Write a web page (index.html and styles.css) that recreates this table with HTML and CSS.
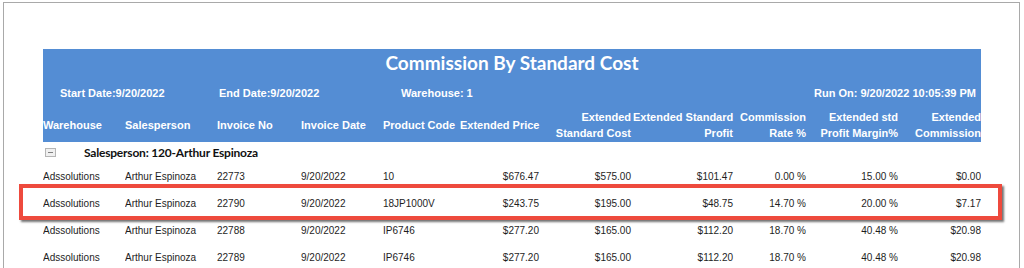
FILE: index.html
```html
<!DOCTYPE html>
<html>
<head>
<meta charset="utf-8">
<link rel="stylesheet" href="styles.css">
</head>
<body>
<div class="page">
  <div class="report">
    <div class="banner">
      <div class="title">Commission By Standard Cost</div>
      <div class="info">
        <span class="info-start">Start Date:9/20/2022</span>
        <span class="info-end">End Date:9/20/2022</span>
        <span class="info-wh">Warehouse: 1</span>
        <span class="info-run">Run On: 9/20/2022 10:05:39 PM</span>
      </div>
    </div>
    <table class="grid">
      <colgroup>
        <col class="c1"><col class="c2"><col class="c3"><col class="c4"><col class="c5"><col class="c6"><col class="c7"><col class="c8"><col class="c9"><col class="c10"><col class="c11">
      </colgroup>
      <thead>
        <tr>
          <th class="l first">Warehouse</th>
          <th class="l">Salesperson</th>
          <th class="l">Invoice No</th>
          <th class="l">Invoice Date</th>
          <th class="l">Product Code</th>
          <th class="l">Extended Price</th>
          <th class="r">Extended<br>Standard Cost</th>
          <th class="r">Extended Standard<br>Profit</th>
          <th class="r">Commission<br>Rate %</th>
          <th class="r">Extended std<br>Profit Margin%</th>
          <th class="r last">Extended<br>Commission</th>
        </tr>
      </thead>
      <tbody>
        <tr class="group">
          <td colspan="11"><span class="toggle"></span><span class="group-label">Salesperson: 120-Arthur Espinoza</span></td>
        </tr>
        <tr class="row">
          <td>Adssolutions</td><td>Arthur Espinoza</td><td>22773</td><td>9/20/2022</td><td>10</td>
          <td class="r">$676.47</td><td class="r">$575.00</td><td class="r">$101.47</td><td class="r">0.00 %</td><td class="r">15.00 %</td><td class="r last">$0.00</td>
        </tr>
        <tr class="row">
          <td>Adssolutions</td><td>Arthur Espinoza</td><td>22790</td><td>9/20/2022</td><td>18JP1000V</td>
          <td class="r">$243.75</td><td class="r">$195.00</td><td class="r">$48.75</td><td class="r">14.70 %</td><td class="r">20.00 %</td><td class="r last">$7.17</td>
        </tr>
        <tr class="row">
          <td>Adssolutions</td><td>Arthur Espinoza</td><td>22788</td><td>9/20/2022</td><td>IP6746</td>
          <td class="r">$277.20</td><td class="r">$165.00</td><td class="r">$112.20</td><td class="r">18.70 %</td><td class="r">40.48 %</td><td class="r last">$20.98</td>
        </tr>
        <tr class="row">
          <td>Adssolutions</td><td>Arthur Espinoza</td><td>22789</td><td>9/20/2022</td><td>IP6746</td>
          <td class="r">$277.20</td><td class="r">$165.00</td><td class="r">$112.20</td><td class="r">18.70 %</td><td class="r">40.48 %</td><td class="r last">$20.98</td>
        </tr>
      </tbody>
    </table>
  </div>
  <div class="highlight"></div>
</div>
</body>
</html>
```

FILE: styles.css
```css
html, body {
  margin: 0;
  padding: 0;
  background: #ffffff;
  overflow: hidden;
}

.page {
  position: relative;
  margin: 2px 0 0 3px;
  width: 1017px;
  height: 266px;
  overflow: hidden;
  border: 1px solid #a9a9a9;
  border-bottom: none;
  box-sizing: border-box;
  padding: 46px 0 0 39px;
}

.report {
  width: 938px;
  overflow: hidden;
}

.banner {
  background: #548dd4;
  color: #ffffff;
}

.title {
  height: 28px;
  line-height: 28px;
  text-align: center;
  font-family: Lato, "Open Sans", sans-serif;
  font-weight: 700;
  font-size: 19px;
}

.info {
  display: flex;
  height: 31px;
  align-items: center;
  font-family: "Liberation Sans", Arial, sans-serif;
  font-weight: 700;
  font-size: 11px;
}

.info-start { margin-left: 17px; width: 159px; }
.info-end { width: 182px; }
.info-wh { flex: 1; }
.info-run { margin-right: 5px; }

.grid {
  width: 938px;
  table-layout: fixed;
  border-collapse: collapse;
  border-spacing: 0;
}

.c1 { width: 82px; }
.c2 { width: 92px; }
.c3 { width: 84px; }
.c4 { width: 82px; }
.c5 { width: 77px; }
.c6 { width: 81px; }
.c7 { width: 92px; }
.c8 { width: 102px; }
.c9 { width: 73px; }
.c10 { width: 92px; }
.c11 { width: 81px; }

.grid th {
  background: #548dd4;
  color: #ffffff;
  font-family: "Liberation Sans", Arial, sans-serif;
  font-weight: 700;
  font-size: 11px;
  line-height: 16px;
  height: 34px;
  padding: 0 2px 0 0;
  white-space: nowrap;
  overflow: hidden;
  vertical-align: middle;
}

.grid th.l { text-align: left; }
.grid th.r { text-align: right; }
.grid th.last, .grid td.last { padding-right: 0; }

.grid td {
  font-family: "Liberation Sans", Arial, sans-serif;
  font-size: 10px;
  color: #1e1e1e;
  padding: 0 2px 0 0;
  white-space: nowrap;
  overflow: hidden;
  vertical-align: middle;
}

.grid td.r { text-align: right; }

.group td {
  height: 21px;
  padding: 0;
}

.toggle {
  display: inline-block;
  position: relative;
  width: 9px;
  height: 7px;
  margin: 0 28px 0 2px;
  border: 1px solid #b5b5b5;
  background: #f0f0f0;
  vertical-align: middle;
}

.toggle::after {
  content: "";
  position: absolute;
  left: 2px;
  right: 2px;
  top: 3px;
  height: 1px;
  background: #808080;
}

.group-label {
  font-family: Lato, "Open Sans", sans-serif;
  font-weight: 700;
  font-size: 12px;
  letter-spacing: -0.2px;
  color: #111111;
  vertical-align: middle;
}

.row td {
  height: 27px;
}

.highlight {
  position: absolute;
  left: 15px;
  top: 181px;
  width: 983px;
  height: 36px;
  box-sizing: border-box;
  border: 4px solid #ee4a3d;
  box-shadow: 2px 2px 2px rgba(0, 0, 0, 0.55);
}
```
